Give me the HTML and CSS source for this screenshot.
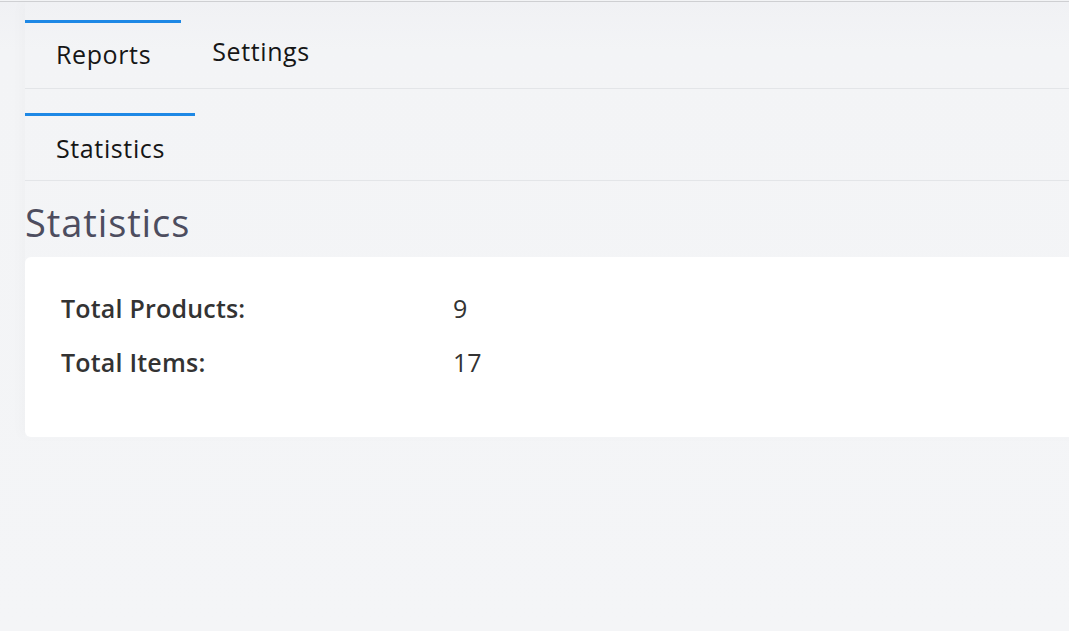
FILE: index.html
```html
<!DOCTYPE html>
<html lang="en">
<head>
<meta charset="utf-8">
<title>Statistics</title>
<link rel="stylesheet" href="styles.css">
</head>
<body>
<div class="page">
  <div class="main">
    <nav class="tabs tabs-primary">
      <a class="tab active">Reports</a>
      <a class="tab">Settings</a>
    </nav>
    <nav class="tabs tabs-secondary">
      <a class="tab active">Statistics</a>
    </nav>
    <h1 class="title">Statistics</h1>
    <section class="card">
      <div class="stats">
        <div class="label">Total Products:</div>
        <div class="value">9</div>
        <div class="label">Total Items:</div>
        <div class="value">17</div>
      </div>
    </section>
  </div>
</div>
</body>
</html>
```
FILE: styles.css
```css
html, body {
  margin: 0;
  padding: 0;
  background: #f3f4f6;
  overflow: hidden;
  font-family: "Open Sans", "Noto Sans", sans-serif;
}

.page {
  border-top: 1px solid #cfd0d3;
  margin-top: 1px;
  min-height: 630px;
  background: linear-gradient(to bottom, #f0f1f4 0px, #f3f4f6 48px, #f4f5f7 100%);
}

.main {
  margin-left: 25px;
  width: 1100px;
  padding-top: 18px;
  box-shadow: -6px 0 10px rgba(0, 0, 0, 0.015);
}

.tabs {
  display: flex;
  align-items: flex-start;
  border-bottom: 1px solid #e3e5e8;
}

.tab {
  display: block;
  font-size: 25px;
  line-height: 30px;
  color: #161616;
  padding: 16px 30px 19px 31px;
  letter-spacing: 0.62px;
}

.tab.active {
  border-top: 3px solid #1e88e5;
}

.tabs-secondary {
  padding-top: 24px;
}

.tabs-secondary .tab {
  padding: 17px 30px 17px 31px;
}

.title {
  margin: 19px 0 13px 0;
  font-size: 38px;
  line-height: 44px;
  font-weight: 400;
  color: #4d4d5f;
  letter-spacing: 0.9px;
}

.card {
  background: #ffffff;
  border-radius: 6px;
  height: 180px;
  box-sizing: border-box;
  padding: 36px 36px 0 36px;
}

.stats {
  display: grid;
  grid-template-columns: 392px auto;
  row-gap: 24px;
  font-size: 25px;
  line-height: 30px;
  color: #333333;
}

.label {
  font-weight: 600;
  letter-spacing: 0.2px;
}

.value {
  font-weight: 400;
}
```
